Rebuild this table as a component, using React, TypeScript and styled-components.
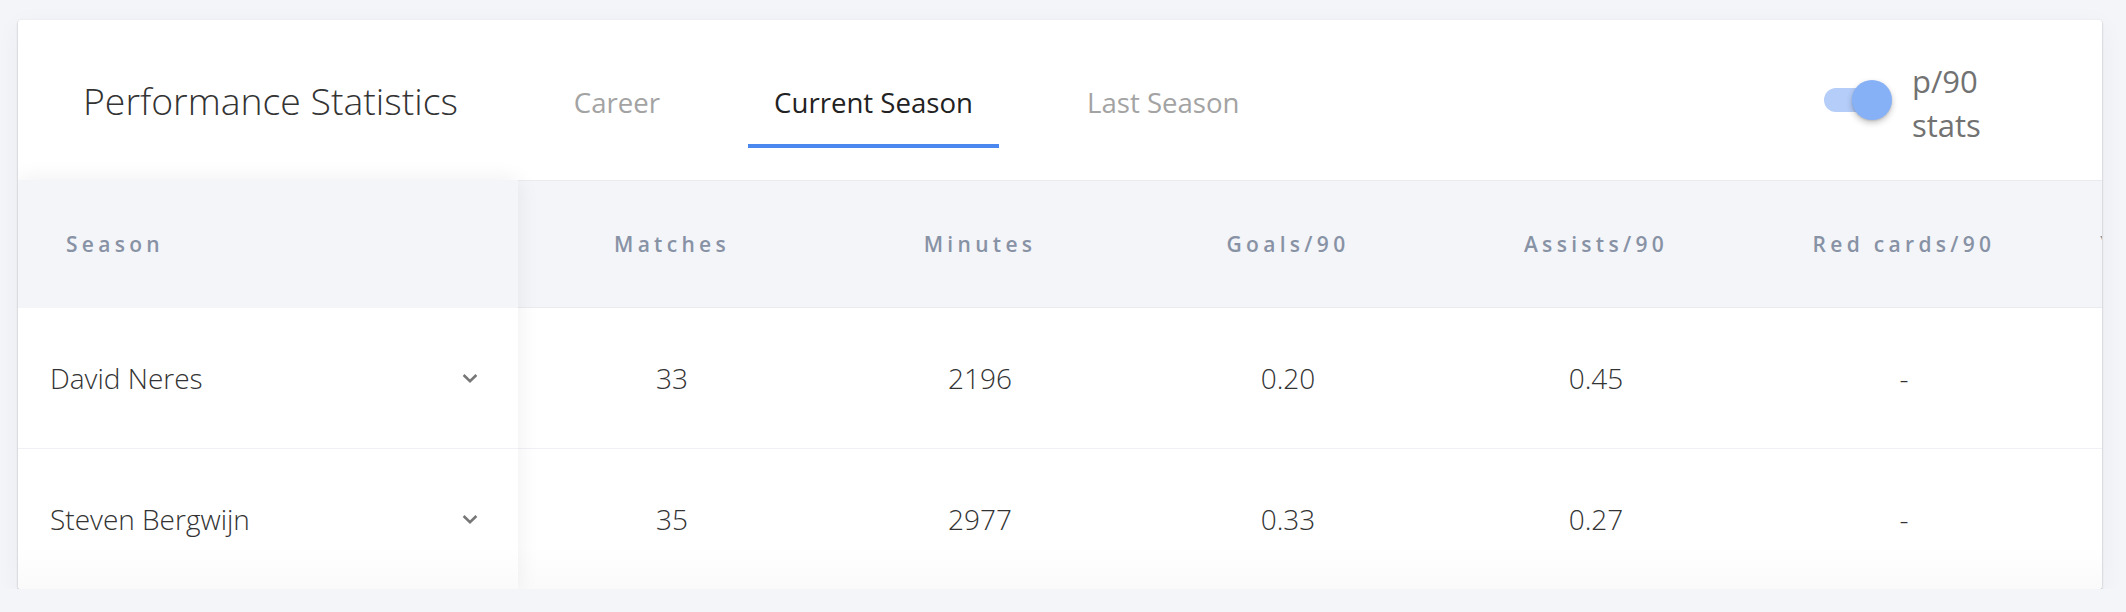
import React from "react";
import styled, { createGlobalStyle } from "styled-components";

const Global = createGlobalStyle`
  html, body { margin: 0; padding: 0; background: #f4f5f9; }
  body { font-family: "Open Sans", "Liberation Sans", sans-serif; }
  * { box-sizing: border-box; }
`;

const Page = styled.div`
  padding: 20px 24px 0 18px;
`;

const Card = styled.section`
  width: 2084px;
  height: 569px;
  background: #fff;
  border-radius: 3px;
  box-shadow: 0 1px 2px rgba(0, 0, 0, 0.32), 0 6px 24px rgba(40, 50, 80, 0.05);
  overflow: hidden;
  display: flex;
  flex-direction: column;
`;

const TopBar = styled.header`
  height: 160px;
  flex: none;
  display: flex;
  align-items: center;
  padding: 0 110px 0 65px;
`;

const Title = styled.h2`
  margin: 0 90px 0 0;
  font-size: 37.4px;
  font-weight: 300;
  color: #333;
  letter-spacing: 0;
`;

const Tabs = styled.nav`
  align-self: flex-end;
  margin-bottom: 32px;
  display: flex;
  gap: 62px;
`;

const Tab = styled.button<{ $active?: boolean }>`
  height: 92px;
  padding: 4px 26px 0;
  border: 0;
  border-bottom: 4px solid ${(p) => (p.$active ? "#4a88f0" : "transparent")};
  background: none;
  font-family: "Open Sans", sans-serif;
  font-size: 27.6px;
  font-weight: 400;
  color: ${(p) => (p.$active ? "#222" : "#a3a3a3")};
  cursor: pointer;
`;

const ToggleGroup = styled.div`
  margin-left: auto;
  display: flex;
  align-items: center;
  gap: 20px;
`;

const Switch = styled.div`
  position: relative;
  width: 68px;
  height: 40px;
  display: flex;
  align-items: center;
`;

const Track = styled.span`
  width: 66px;
  height: 24px;
  border-radius: 12px;
  background: #b5cdf9;
`;

const Thumb = styled.span`
  position: absolute;
  right: 0;
  top: 0;
  width: 40px;
  height: 40px;
  border-radius: 50%;
  background: #87b1f7;
  box-shadow: 0 3px 6px rgba(0, 0, 0, 0.22), 0 1px 2px rgba(0, 0, 0, 0.12);
`;

const ToggleLabel = styled.span`
  width: 80px;
  margin-top: 6px;
  font-size: 31px;
  line-height: 44px;
  color: #727272;
  font-weight: 400;
`;

const TableArea = styled.div`
  flex: 1;
  display: flex;
  min-height: 0;
`;

const FixedCol = styled.div`
  width: 500px;
  flex: none;
  position: relative;
  z-index: 2;
  background: #fff;
  box-shadow: 0 0 22px rgba(0, 0, 0, 0.07);
`;

const FixedHead = styled.div`
  height: 128px;
  background: #f4f5f9;
  display: flex;
  align-items: center;
  padding-left: 48px;
`;

const HeadText = styled.span`
  font-size: 21px;
  font-weight: 600;
  letter-spacing: 4.3px;
  color: #8892a5;
  white-space: nowrap;
`;

const NameCell = styled.div<{ $last?: boolean }>`
  height: ${(p) => (p.$last ? 140 : 141)}px;
  display: flex;
  align-items: center;
  justify-content: space-between;
  padding: 0 40px 0 32px;
  border-bottom: ${(p) => (p.$last ? "none" : "1px solid #f0f1f5")};
  background: ${(p) => (p.$last ? "linear-gradient(#fff 70%, #fafafa)" : "#fff")};
`;

const NameText = styled.span`
  font-size: 28px;
  font-weight: 300;
  color: #333;
`;

const ScrollArea = styled.div`
  flex: 1;
  overflow: hidden;
  min-width: 0;
`;

const Row = styled.div<{ $head?: boolean; $last?: boolean }>`
  display: grid;
  grid-template-columns: repeat(6, 308px);
  width: max-content;
  height: ${(p) => (p.$head ? 128 : p.$last ? 140 : 141)}px;
  background: ${(p) =>
    p.$head ? "#f4f5f9" : p.$last ? "linear-gradient(#fff 70%, #fafafa)" : "#fff"};
  border-top: ${(p) => (p.$head ? "1px solid #e9ebf0" : "none")};
  border-bottom: ${(p) =>
    p.$head ? "1px solid #e9ebf0" : p.$last ? "none" : "1px solid #f0f1f5"};
`;

const Cell = styled.div`
  display: flex;
  align-items: center;
  justify-content: center;
  font-size: 28px;
  font-weight: 300;
  color: #333;
`;

const Chevron = () => (
  <svg width="16" height="11" viewBox="0 0 16 11" aria-hidden="true">
    <path d="M1.6 2 L8 8.2 L14.4 2" fill="none" stroke="#777" strokeWidth="2.6" />
  </svg>
);

const columns = ["Matches", "Minutes", "Goals/90", "Assists/90", "Red cards/90", "Yellow cards/90"];

const players = [
  { name: "David Neres", values: ["33", "2196", "0.20", "0.45", "-", "0.04"] },
  { name: "Steven Bergwijn", values: ["35", "2977", "0.33", "0.27", "-", "0.09"] },
];

export default function App() {
  return (
    <>
      <Global />
      <Page>
        <Card>
          <TopBar>
            <Title>Performance Statistics</Title>
            <Tabs>
              <Tab>Career</Tab>
              <Tab $active>Current Season</Tab>
              <Tab>Last Season</Tab>
            </Tabs>
            <ToggleGroup>
              <Switch>
                <Track />
                <Thumb />
              </Switch>
              <ToggleLabel>p/90 stats</ToggleLabel>
            </ToggleGroup>
          </TopBar>
          <TableArea>
            <FixedCol>
              <FixedHead>
                <HeadText>Season</HeadText>
              </FixedHead>
              {players.map((p, i) => (
                <NameCell key={p.name} $last={i === players.length - 1}>
                  <NameText>{p.name}</NameText>
                  <Chevron />
                </NameCell>
              ))}
            </FixedCol>
            <ScrollArea>
              <Row $head>
                {columns.map((c) => (
                  <Cell key={c}>
                    <HeadText>{c}</HeadText>
                  </Cell>
                ))}
              </Row>
              {players.map((p, i) => (
                <Row key={p.name} $last={i === players.length - 1}>
                  {p.values.map((v, j) => (
                    <Cell key={j}>{v}</Cell>
                  ))}
                </Row>
              ))}
            </ScrollArea>
          </TableArea>
        </Card>
      </Page>
    </>
  );
}
